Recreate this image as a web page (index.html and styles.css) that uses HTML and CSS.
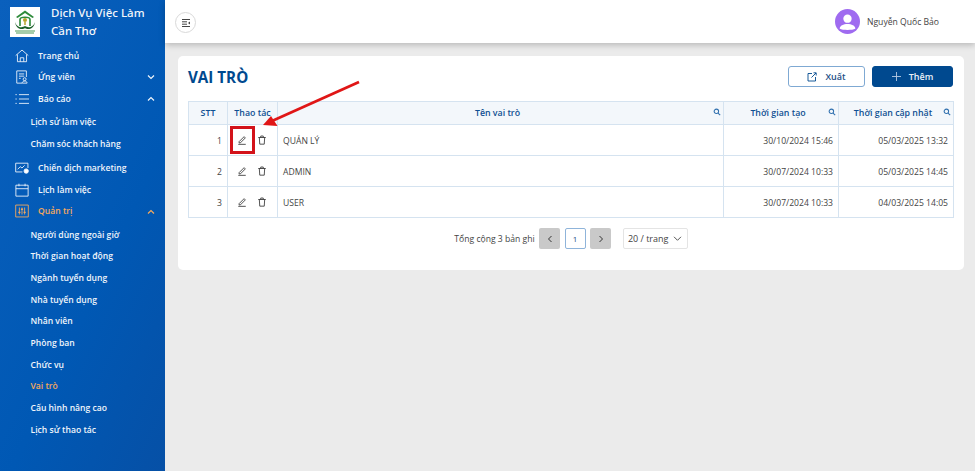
FILE: index.html
```html
<!DOCTYPE html>
<html lang="vi">
<head>
<meta charset="utf-8">
<title>Vai trò</title>
<link rel="stylesheet" href="styles.css">
</head>
<body>
<div class="app">
  <aside class="sidebar">
    <div class="brand">
      <div class="logo">
        <svg width="30" height="30" viewBox="0 0 30 30">
          <rect width="30" height="30" fill="#fff"/>
          <path d="M15 3.500 24 10l-1.500 1L15 6 7.500 11 6 10Z" fill="#2e8b3a"/>
          <path d="M10 19v-6.500c0-3 10-3 10 0V19" fill="none" stroke="#2e8b3a" stroke-width="1.600"/>
          <circle cx="15" cy="13" r="2" fill="#b9a32c"/>
          <path d="M15 15v3" stroke="#b9a32c" stroke-width="1.500"/>
          <path d="M5 15c2 6 7 6 10 4 3 2 8 2 10-4-1 8-8 8-10 6-2 2-9 2-10-6z" fill="#1d5f2a"/>
          <path d="M5 24h20M6 26h18" stroke="#4d9a57" stroke-width="1"/>
        </svg>
      </div>
      <div class="brand-name">Dịch Vụ Việc Làm Cần Thơ</div>
    </div>
    <nav class="menu">
      <a class="item">
        <svg class="ico" viewBox="0 0 16 16"><path d="M.8 7.500 8 1.200l7.200 6.300M2.800 6.200v8.300h10.400V6.200M6 14.500v-4.500h4v4.500"/></svg>
        <span>Trang chủ</span>
      </a>
      <a class="item">
        <svg class="ico" viewBox="0 0 16 16"><path d="M13 8V1h-11v14h6M4.500 4.500h6M4.500 7h6M4.500 9.500h2"/><circle cx="11" cy="10.500" r="1.700"/><path d="M8.200 15c0-3.200 5.600-3.200 5.600 0z"/></svg>
        <span>Ứng viên</span>
        <svg class="chev" viewBox="0 0 10 10"><path d="M2 3.500 5 6.500 8 3.500"/></svg>
      </a>
      <a class="item">
        <svg class="ico" viewBox="0 0 16 16"><path d="M4.500 3H16M4.500 8H16M4.500 13H16M.5 3h1.500M.5 8h1.500M.5 13h1.500"/></svg>
        <span>Báo cáo</span>
        <svg class="chev" viewBox="0 0 10 10"><path d="M2 6.500 5 3.500 8 6.500"/></svg>
      </a>
      <div class="subs">
        <a class="sub">Lịch sử làm việc</a>
        <a class="sub">Chăm sóc khách hàng</a>
      </div>
      <a class="item">
        <svg class="ico" viewBox="0 0 16 16"><path d="M8.500 12.500H.8v-10h14V8M3 9.500 6 6.500l2 1.500 3-3"/><circle cx="12.800" cy="11.500" r="2.500" fill="#fff"/></svg>
        <span>Chiến dịch marketing</span>
      </a>
      <a class="item">
        <svg class="ico" viewBox="0 0 16 16"><path d="M1 2.500h14v12.500H1zM1 6.500h14M4.500 .8v3M11.500 .8v3"/></svg>
        <span>Lịch làm việc</span>
      </a>
      <a class="item active">
        <svg class="ico" viewBox="0 0 16 16"><path d="M.8 1.200h14.400v13.600H.8zM5 4v8M8 4v8M11 4v8"/><path d="M3.800 9.500h2.400M6.800 6h2.400M9.800 9.500h2.400" stroke-width="1.500"/></svg>
        <span>Quản trị</span>
        <svg class="chev" viewBox="0 0 10 10"><path d="M2 6.500 5 3.500 8 6.500"/></svg>
      </a>
      <div class="subs">
        <a class="sub">Người dùng ngoài giờ</a>
        <a class="sub">Thời gian hoạt động</a>
        <a class="sub">Ngành tuyển dụng</a>
        <a class="sub">Nhà tuyển dụng</a>
        <a class="sub">Nhân viên</a>
        <a class="sub">Phòng ban</a>
        <a class="sub">Chức vụ</a>
        <a class="sub current">Vai trò</a>
        <a class="sub">Cấu hình nâng cao</a>
        <a class="sub">Lịch sử thao tác</a>
      </div>
    </nav>
  </aside>
  <div class="main">
    <header class="topbar">
      <button class="toggle" type="button" aria-label="Menu">
        <svg width="10" height="10" viewBox="0 0 10 10"><path d="M1 1.500h8M1 3.800h5M1 6.200h5M1 8.500h8" stroke="#444" stroke-width="1" fill="none"/><path d="M9 3.500 7 5l2 1.500z" fill="#444"/></svg>
      </button>
      <div class="user">
        <svg class="avatar" viewBox="0 0 24 24"><circle cx="12" cy="12" r="12" fill="#9f6bf0"/><circle cx="12" cy="9.300" r="4" fill="#fff"/><path d="M4.500 19c0-6 15-6 15 0-3 1.500-12 1.500-15 0z" fill="#fff"/></svg>
        <span>Nguyễn Quốc Bảo</span>
      </div>
    </header>
    <main class="content">
      <section class="card">
        <div class="card-head">
          <h1>VAI TRÒ</h1>
          <div class="actions">
            <button class="btn outline" type="button">
              <svg width="10" height="10" viewBox="0 0 10 10"><path d="M5 1.500H1v7.500h7.500V5M4.500 5.500 9 1M6.500 .8H9.200V3.500" fill="none" stroke="#00498f" stroke-width=".9"/></svg>
              <span>Xuất</span>
            </button>
            <button class="btn solid" type="button">
              <svg width="9" height="9" viewBox="0 0 9 9"><path d="M4.500 0v9M0 4.500h9" stroke="#b5cbe3" stroke-width=".9"/></svg>
              <span>Thêm</span>
            </button>
          </div>
        </div>
        <table class="grid">
          <colgroup><col class="c1"><col class="c2"><col class="c3"><col class="c4"><col class="c5"></colgroup>
          <thead>
            <tr>
              <th>STT</th>
              <th>Thao tác</th>
              <th class="searchable">Tên vai trò<svg class="mag" viewBox="0 0 10 10"><circle cx="4.200" cy="4.200" r="2.800"/><path d="m6.300 6.300 2.700 2.700"/></svg></th>
              <th class="searchable">Thời gian tạo<svg class="mag" viewBox="0 0 10 10"><circle cx="4.200" cy="4.200" r="2.800"/><path d="m6.300 6.300 2.700 2.700"/></svg></th>
              <th class="searchable">Thời gian cập nhật<svg class="mag" viewBox="0 0 10 10"><circle cx="4.200" cy="4.200" r="2.800"/><path d="m6.300 6.300 2.700 2.700"/></svg></th>
            </tr>
          </thead>
          <tbody>
            <tr>
              <td class="num">1</td>
              <td class="ops">
                <svg class="op" viewBox="0 0 12 12"><path d="M2.500 8 8.500 2l1.500 1.500-6 6H2.500zM1.500 11.200h9"/></svg>
                <svg class="op" viewBox="0 0 12 12"><path d="M1.500 3h9M2.800 3l.5 8h5.400l.5-8M4.500 3V1.200h3V3"/></svg>
              </td>
              <td>QUẢN LÝ</td>
              <td class="num">30/10/2024 15:46</td>
              <td class="num">05/03/2025 13:32</td>
            </tr>
            <tr>
              <td class="num">2</td>
              <td class="ops">
                <svg class="op" viewBox="0 0 12 12"><path d="M2.500 8 8.500 2l1.500 1.500-6 6H2.500zM1.500 11.200h9"/></svg>
                <svg class="op" viewBox="0 0 12 12"><path d="M1.500 3h9M2.800 3l.5 8h5.400l.5-8M4.500 3V1.200h3V3"/></svg>
              </td>
              <td>ADMIN</td>
              <td class="num">30/07/2024 10:33</td>
              <td class="num">05/03/2025 14:45</td>
            </tr>
            <tr>
              <td class="num">3</td>
              <td class="ops">
                <svg class="op" viewBox="0 0 12 12"><path d="M2.500 8 8.500 2l1.500 1.500-6 6H2.500zM1.500 11.200h9"/></svg>
                <svg class="op" viewBox="0 0 12 12"><path d="M1.500 3h9M2.800 3l.5 8h5.400l.5-8M4.500 3V1.200h3V3"/></svg>
              </td>
              <td>USER</td>
              <td class="num">30/07/2024 10:33</td>
              <td class="num">04/03/2025 14:05</td>
            </tr>
          </tbody>
        </table>
        <div class="pager">
          <span class="total">Tổng cộng 3 bản ghi</span>
          <span class="pg arrow"><svg width="8" height="8" viewBox="0 0 8 8"><path d="M5.500 1 2.500 4l3 3" fill="none" stroke="#333" stroke-width="1"/></svg></span>
          <span class="pg now">1</span>
          <span class="pg arrow"><svg width="8" height="8" viewBox="0 0 8 8"><path d="M2.500 1l3 3-3 3" fill="none" stroke="#333" stroke-width="1"/></svg></span>
          <span class="size">20 / trang<svg width="9" height="9" viewBox="0 0 9 9"><path d="M1 2.800 4.500 6.300 8 2.800" fill="none" stroke="#444" stroke-width=".9"/></svg></span>
        </div>
      </section>
    </main>
  </div>
</div>
<div class="highlight"></div>
<svg class="pointer" width="102" height="50" viewBox="0 0 102 50"><path d="M99 2 12 41" stroke="#e01616" stroke-width="2.800" fill="none"/><path d="M3 45 11 36 17.500 46z" fill="#e01616"/></svg>
</body>
</html>
```
FILE: styles.css
```css
* { box-sizing: border-box; }
html, body { margin: 0; height: 100%; overflow: hidden; }
body { font-family: "Open Sans", "Noto Sans", sans-serif; font-size: 8.600px; color: #444; background: #ebebeb; }
.app { display: flex; height: 471px; }

.sidebar { width: 165px; flex: none; background: linear-gradient(115deg, #0a60bd 0%, #0058b4 60%, #0650a6 100%); color: #fff; }
.brand { display: flex; gap: 11px; padding: 7px 0 0 10px; height: 44.700px; }
.logo { width: 30px; height: 30px; flex: none; }
.logo svg { display: block; }
.brand-name { font-family: "Noto Sans", sans-serif; font-size: 11.500px; font-weight: 500; line-height: 18px; width: 110px; margin-top: -3px; color: #f2f6fb; }
.menu { display: flex; flex-direction: column; font-weight: 600; }
.item, .sub { display: flex; align-items: center; height: 21.700px; white-space: nowrap; color: #f0f5fb; }
.item { padding-left: 15px; position: relative; }
.item span { margin-left: 9px; }
.subs { padding: 1.500px 0 2.500px; }
.sub { padding-left: 30.500px; }
.ico { width: 14px; height: 14px; fill: none; stroke: currentColor; stroke-width: 1; flex: none; }
.chev { position: absolute; left: 146px; top: 6px; width: 10px; height: 10px; fill: none; stroke: currentColor; stroke-width: 1.200; }
.item.active, .sub.current { color: #f6a95c; }

.main { flex: 1; min-width: 0; display: flex; flex-direction: column; }
.topbar { height: 43px; flex: none; background: #fff; display: flex; align-items: center; justify-content: space-between; padding: 0 36px 0 10px; box-shadow: 0 2px 6px rgba(0,0,0,.22); }
.toggle { width: 21px; height: 21px; margin-top: 2px; border-radius: 50%; border: 1px solid #d9d9d9; background: #fff; padding: 0; display: flex; align-items: center; justify-content: center; }
.user { display: flex; align-items: center; gap: 7px; font-size: 8.600px; color: #444; }
.avatar { width: 25px; height: 25px; display: block; }

.content { flex: 1; padding: 13px 11px 0 13px; }
.card { background: #fff; border-radius: 5px; height: 214px; padding: 10px 11px 0 10px; }
.card-head { display: flex; justify-content: space-between; align-items: flex-start; height: 35px; }
h1 { margin: 0; font-size: 15.200px; line-height: 22px; font-weight: 700; color: #00498f; }
.actions { display: flex; gap: 7px; }
.btn { height: 21px; border-radius: 3px; font: 600 9px "Open Sans", sans-serif; display: flex; align-items: center; justify-content: center; gap: 8px; padding: 0; }
.outline { width: 77px; background: #fff; border: 1px solid #7fa9d3; color: #1d4f86; }
.solid { width: 81px; background: #00498f; border: 1px solid #00498f; color: #e8f0f8; }

.grid { width: 765px; table-layout: fixed; border-collapse: collapse; border: 1px solid #d5e3f0; }
.c1 { width: 39px; } .c2 { width: 50px; } .c3 { width: 446px; } .c4 { width: 115px; } .c5 { width: 115px; }
th, td { border: 1px solid #d5e3f0; padding: 0 5px; }
th { height: 23px; background: #f3f7fb; color: #0f4f92; font-weight: 600; font-size: 8.800px; text-align: center; }
th.searchable { position: relative; padding-right: 11px; }
.mag { position: absolute; right: 2px; top: 6px; width: 8px; height: 8px; fill: none; stroke: #2f6fae; stroke-width: 1.300; }
td { height: 31px; color: #444; padding-top: 1px; }
.num { text-align: right; }
td.ops { padding: 0 0 0 6px; white-space: nowrap; }
.op { width: 10px; height: 10px; fill: none; stroke: #333; stroke-width: 1; margin: 0 5px 1px 3px; vertical-align: middle; }

.pager { display: flex; align-items: center; justify-content: center; gap: 4.500px; margin-top: 10px; height: 21px; padding-left: 1px; }
.pg { width: 21px; height: 21px; display: flex; align-items: center; justify-content: center; border-radius: 2px; font-size: 8px; }
.arrow { background: #c9c9c9; }
.now { border: 1px solid #8fb4da; color: #1d4f86; background: #fff; }
.size { width: 65px; height: 21px; margin-left: 7px; border: 1px solid #e4e4e4; border-radius: 2px; display: flex; align-items: center; justify-content: center; gap: 5px; font-size: 9px; color: #444; }

.highlight { position: absolute; left: 230px; top: 126px; width: 25px; height: 28px; border: 3px solid #d3131a; }
.pointer { position: absolute; left: 260px; top: 80px; }
```
